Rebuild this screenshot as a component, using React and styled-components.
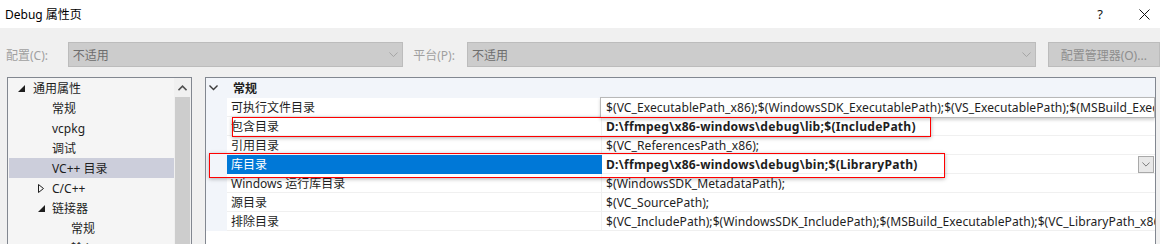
import React from 'react';
import styled, { createGlobalStyle } from 'styled-components';

const GlobalStyle = createGlobalStyle`
  body {
    margin: 0;
    font-family: "Noto Sans", "Noto Sans CJK SC", sans-serif;
    font-size: 12px;
  }
`;

const Window = styled.div`
  width: 1160px;
  height: 244px;
  overflow: hidden;
  background: #f0f0f0;
  display: flex;
  flex-direction: column;
`;

const TitleBar = styled.div`
  height: 28px;
  flex: none;
  background: #fff;
  display: flex;
  align-items: center;
  padding-left: 5px;
  color: #000;
  font-size: 12px;
`;

const TitleButtons = styled.div`
  margin-left: auto;
  display: flex;
  align-items: center;
  gap: 36px;
  padding-right: 10px;
`;

const HelpGlyph = styled.span`
  font-size: 13px;
  color: #111;
`;

const ConfigRow = styled.div`
  margin-top: 14px;
  height: 25px;
  flex: none;
  display: flex;
  align-items: center;
`;

const Label = styled.div`
  width: ${(p) => p.$width}px;
  padding-left: ${(p) => p.$pad || 0}px;
  color: #a0a0a0;
  white-space: nowrap;
`;

const Combo = styled.div`
  width: ${(p) => p.$width}px;
  height: 25px;
  box-sizing: border-box;
  background: #cccccc;
  border: 1px solid #bcbcbc;
  display: flex;
  align-items: center;
  padding: 0 4px 0 4px;
  color: #6d6d6d;

  span {
    flex: 1;
  }
`;

const ManagerButton = styled.div`
  margin-left: 12px;
  width: 113px;
  height: 25px;
  box-sizing: border-box;
  background: #cccccc;
  border: 1px solid #bcbcbc;
  color: #8e8e8e;
  display: flex;
  align-items: center;
  justify-content: center;
`;

const Body = styled.div`
  margin-top: 10px;
  flex: 1;
  display: flex;
  padding-left: 7px;
  gap: 13px;
  min-height: 0;
`;

const TreePanel = styled.div`
  width: 185px;
  box-sizing: border-box;
  border: 1px solid #828790;
  border-bottom: none;
  background: #f5f5f5;
  display: flex;
`;

const Tree = styled.div`
  flex: 1;
  padding-left: 1px;
`;

const TreeRow = styled.div`
  height: 20px;
  display: flex;
  align-items: center;
  padding-left: ${(p) => 5 + p.$level * 19}px;
  background: ${(p) => (p.$selected ? '#cccedb' : 'transparent')};
  color: #1e1e1e;
  white-space: nowrap;
`;

const Toggle = styled.div`
  width: 19px;
  flex: none;
  display: flex;
  align-items: center;
  padding-left: ${(p) => p.$offset}px;
  box-sizing: border-box;
`;

const ScrollBar = styled.div`
  width: 17px;
  flex: none;
  background: #f0f0f0;
  display: flex;
  flex-direction: column;
  align-items: center;
`;

const ScrollArrow = styled.div`
  height: 19px;
  display: flex;
  align-items: center;
  justify-content: center;
`;

const ScrollThumb = styled.div`
  width: 15px;
  flex: 1;
  background: #cdcdcd;
  margin-right: 1px;
`;

const GridPanel = styled.div`
  width: 951px;
  box-sizing: border-box;
  border: 1px solid #828790;
  border-bottom: none;
  background: #fff;
  position: relative;
  overflow: hidden;
`;

const CategoryRow = styled.div`
  height: 20px;
  background: #f2f5fa;
  display: flex;
  align-items: center;
  font-weight: bold;
  color: #1e1e1e;

  svg {
    margin: 0 15px 0 3px;
  }
`;

const PropRow = styled.div`
  height: 19px;
  display: grid;
  grid-template-columns: 21px 375px 1fr;
`;

const Gutter = styled.div`
  background: #f2f5fa;
`;

const NameCell = styled.div`
  box-sizing: border-box;
  padding-left: 4px;
  border-bottom: 1px solid ${(p) => (p.$selected ? '#0078d7' : '#f0f0f0')};
  border-right: 1px solid ${(p) => (p.$selected ? '#0078d7' : '#f0f0f0')};
  background: ${(p) => (p.$selected ? '#0078d7' : '#fff')};
  color: ${(p) => (p.$selected ? '#fff' : '#1e1e1e')};
  display: flex;
  align-items: center;
  white-space: nowrap;
`;

const ValueCell = styled.div`
  box-sizing: border-box;
  padding-left: 4px;
  border-bottom: 1px solid #f0f0f0;
  display: flex;
  align-items: center;
  white-space: nowrap;
  overflow: hidden;
  color: #1e1e1e;
  font-size: 12.1px;
  font-weight: ${(p) => (p.$bold ? 'bold' : 'normal')};
  letter-spacing: ${(p) => (p.$bold ? '0.25px' : '0.05px')};
  position: relative;
  ${(p) =>
    p.$editing &&
    `
    border: 1px solid #b8b8b8;
    margin: -1px 0 -1px -2px;
    padding-left: 5px;
    background: #fff;
    box-shadow: 0 2px 3px rgba(0, 0, 0, 0.18);
    z-index: 1;
  `}

  span {
    flex: 1;
    overflow: hidden;
  }
`;

const DropButton = styled.div`
  width: 16px;
  height: 17px;
  box-sizing: border-box;
  margin-right: 1px;
  flex: none;
  border: 1px solid #a9a9a9;
  background: #e8e8e8;
  display: flex;
  align-items: center;
  justify-content: center;
`;

const RedBox = styled.div`
  position: absolute;
  left: ${(p) => p.$x}px;
  top: ${(p) => p.$y}px;
  width: ${(p) => p.$w}px;
  height: ${(p) => p.$h}px;
  box-sizing: border-box;
  border: 1.5px solid #ff0000;
  box-shadow: 0 1px 4px rgba(0, 0, 0, 0.3);
  z-index: 2;
  pointer-events: none;
`;

const Chevron = ({ color = '#8a8a8a', size = 9, weight = 1 }) => (
  <svg width={size} height={size / 2 + 1} viewBox="0 0 10 6">
    <polyline points="0.5,0.5 5,5 9.5,0.5" fill="none" stroke={color} strokeWidth={weight} />
  </svg>
);

const Expanded = () => (
  <svg width="7" height="7" viewBox="0 0 7 7">
    <polygon points="7,0 7,7 0,7" fill="#1e1e1e" />
  </svg>
);

const Collapsed = () => (
  <svg width="6" height="9" viewBox="0 0 6 9">
    <polygon points="0.5,0.5 5.5,4.5 0.5,8.5" fill="none" stroke="#1e1e1e" strokeWidth="1" />
  </svg>
);

const treeItems = [
  { label: '通用属性', level: 0, toggle: 'open' },
  { label: '常规', level: 1 },
  { label: 'vcpkg', level: 1 },
  { label: '调试', level: 1 },
  { label: 'VC++ 目录', level: 1, selected: true },
  { label: 'C/C++', level: 1, toggle: 'closed' },
  { label: '链接器', level: 1, toggle: 'open' },
  { label: '常规', level: 2 },
  { label: '输入', level: 2 },
];

const props = [
  {
    name: '可执行文件目录',
    value:
      '$(VC_ExecutablePath_x86);$(WindowsSDK_ExecutablePath);$(VS_ExecutablePath);$(MSBuild_ExecutablePath);$(FxCopDir);$(PATH);',
    editing: true,
  },
  { name: '包含目录', value: 'D:\\ffmpeg\\x86-windows\\debug\\lib;$(IncludePath)', bold: true },
  { name: '引用目录', value: '$(VC_ReferencesPath_x86);' },
  {
    name: '库目录',
    value: 'D:\\ffmpeg\\x86-windows\\debug\\bin;$(LibraryPath)',
    bold: true,
    selected: true,
  },
  { name: 'Windows 运行库目录', value: '$(WindowsSDK_MetadataPath);' },
  { name: '源目录', value: '$(VC_SourcePath);' },
  {
    name: '排除目录',
    value:
      '$(VC_IncludePath);$(WindowsSDK_IncludePath);$(MSBuild_ExecutablePath);$(VC_LibraryPath_x86);',
  },
];

export default function App() {
  return (
    <Window>
      <GlobalStyle />
      <TitleBar>
        Debug 属性页
        <TitleButtons>
          <HelpGlyph>?</HelpGlyph>
          <svg width="11" height="11" viewBox="0 0 11 11">
            <path d="M0.5 0.5 10.5 10.5M10.5 0.5 0.5 10.5" stroke="#111" strokeWidth="1" />
          </svg>
        </TitleButtons>
      </TitleBar>

      <ConfigRow>
        <Label $width={62} $pad={6}>配置(C):</Label>
        <Combo $width={337}>
          <span>不适用</span>
          <Chevron color="#a0a0a0" />
        </Combo>
        <Label $width={54} $pad={10}>平台(P):</Label>
        <Combo $width={571}>
          <span>不适用</span>
          <Chevron color="#a0a0a0" />
        </Combo>
        <ManagerButton>配置管理器(O)...</ManagerButton>
      </ConfigRow>

      <Body>
        <TreePanel>
          <Tree>
            {treeItems.map((item, i) => (
              <TreeRow key={i} $level={item.level} $selected={item.selected}>
                <Toggle $offset={item.level === 0 ? 4 : 5}>
                  {item.toggle === 'open' && <Expanded />}
                  {item.toggle === 'closed' && <Collapsed />}
                </Toggle>
                {item.label}
              </TreeRow>
            ))}
          </Tree>
          <ScrollBar>
            <ScrollArrow>
              <svg width="9" height="6" viewBox="0 0 10 6">
                <polyline points="0.5,5.5 5,1 9.5,5.5" fill="none" stroke="#505050" strokeWidth="1.8" />
              </svg>
            </ScrollArrow>
            <ScrollThumb />
          </ScrollBar>
        </TreePanel>

        <GridPanel>
          <CategoryRow>
            <Chevron color="#3c3c3c" weight={1.6} />
            常规
          </CategoryRow>
          {props.map((p, i) => (
            <PropRow key={i}>
              <Gutter />
              <NameCell $selected={p.selected}>{p.name}</NameCell>
              <ValueCell $bold={p.bold} $editing={p.editing}>
                <span>{p.value}</span>
                {p.selected && (
                  <DropButton>
                    <Chevron color="#606060" size={8} />
                  </DropButton>
                )}
              </ValueCell>
            </PropRow>
          ))}
          <RedBox $x={26} $y={39} $w={699} $h={20} />
          <RedBox $x={3} $y={75} $w={736} $h={25} />
        </GridPanel>
      </Body>
    </Window>
  );
}
